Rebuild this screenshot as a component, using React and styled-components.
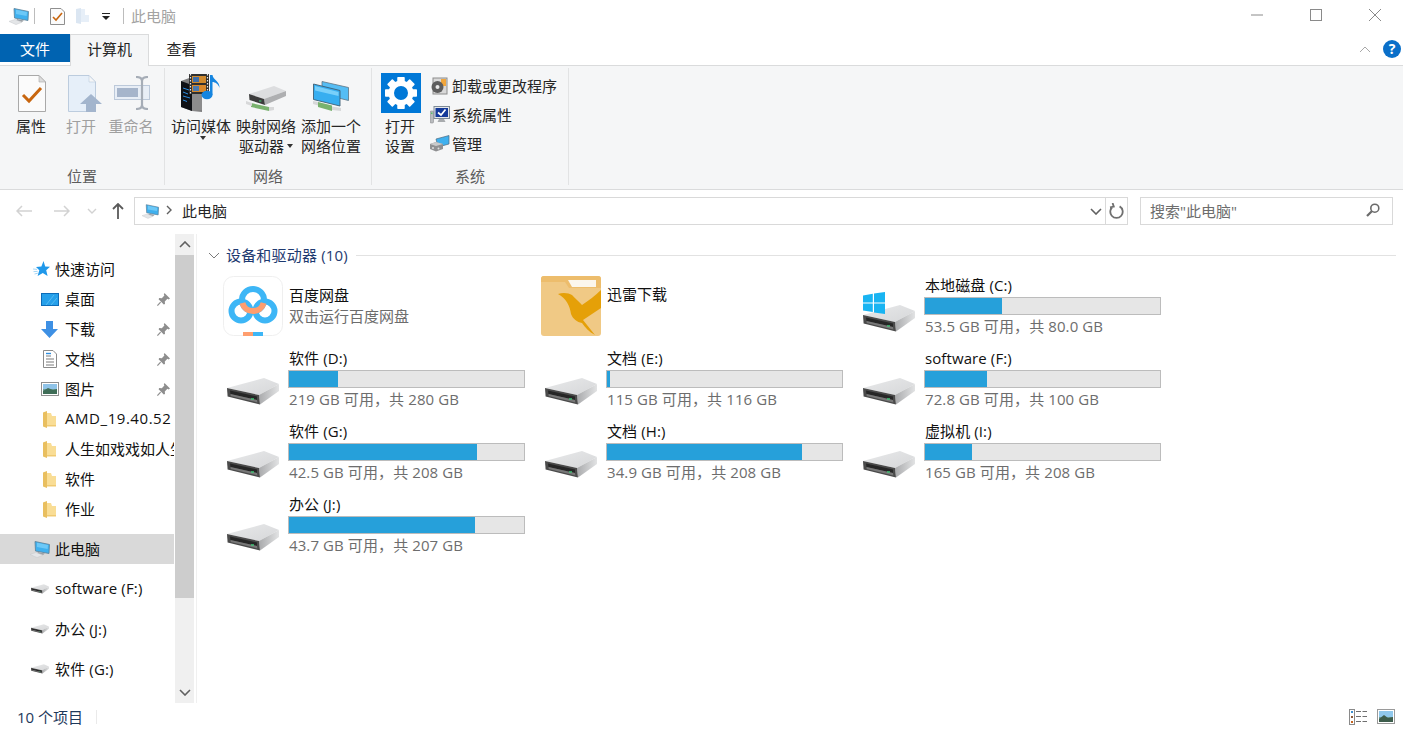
import React from "react";
import styled, { createGlobalStyle } from "styled-components";

const GlobalStyle = createGlobalStyle`
  html, body {
    margin: 0;
    padding: 0;
    background: #fff;
    overflow: hidden;
  }
  body {
    font-family: "Open Sans", "Noto Sans CJK SC", sans-serif;
    font-size: 15px;
    color: #111;
  }
  * { box-sizing: border-box; }
`;

// icons

const ComputerIcon = ({ w = 20, h = 17 }) => (
  <svg width={w} height={h} viewBox="0 0 20 17">
    <path d="M5 0.5 L19.5 3.5 L19 12.5 L5.5 10 Z" fill="#3fb0ee" stroke="#5c7f96" strokeWidth="0.8" />
    <path d="M7 1.8 L18 4 L17.6 8 L7 6 Z" fill="#6cc8f7" />
    <path d="M8 11 L15 12.4 L13 14 L7 12.8 Z" fill="#9aa0a6" />
    <path d="M0 13.4 L6 11.5 L13 14.2 L7 16.6 Z" fill="#e4e6e8" stroke="#c7c9cc" strokeWidth="0.5" />
  </svg>
);

const DiskIcon = ({ w = 52, h = 27 }) => (
  <svg width={w} height={h} viewBox="0 0 52 27">
    <defs>
      <linearGradient id="diskTop" x1="0" y1="0" x2="1" y2="1">
        <stop offset="0" stopColor="#e8e9ea" />
        <stop offset="1" stopColor="#d6d7d9" />
      </linearGradient>
      <linearGradient id="diskSide" x1="0" y1="0" x2="1" y2="0">
        <stop offset="0" stopColor="#a9aaac" />
        <stop offset="1" stopColor="#e2e3e4" />
      </linearGradient>
    </defs>
    <path d="M0 10 L37 0 L52 6 L32 17 Z" fill="url(#diskTop)" />
    <path d="M32 17 L52 6 L52 13 L33 26.5 Z" fill="url(#diskSide)" />
    <path d="M0 10 L32 17 L33 26.5 L0.6 18.5 Z" fill="#4a4a4a" />
    <path d="M3 12.5 L30 18.4 L30 22 L3.5 16 Z" fill="#262626" />
    <path d="M3.5 16 L30 22 L30.4 24.4 L3.7 18 Z" fill="#777" />
    <rect x="24" y="20.3" width="3" height="1.3" fill="#3fd17a" />
  </svg>
);

const WindowsLogo = () => (
  <svg width="22" height="22" viewBox="0 0 22 22">
    <path d="M0 3.4 L9.8 1.8 V10.4 H0 Z M11 1.6 L22 0 V10.4 H11 Z M0 11.6 H9.8 V20 L0 18.6 Z M11 11.6 H22 V22 L11 20.4 Z" fill="#19b4f2" />
  </svg>
);

const BaiduIcon = () => (
  <svg width="60" height="60" viewBox="0 0 60 60">
    <rect x="0.5" y="0.5" width="59" height="59" rx="10" fill="#fff" stroke="#efefef" />
    <circle cx="18" cy="35" r="9.5" fill="none" stroke="#3db6f6" strokeWidth="6" />
    <circle cx="42" cy="35" r="9.5" fill="none" stroke="#3db6f6" strokeWidth="6" />
    <circle cx="30" cy="24" r="11" fill="none" stroke="#3db6f6" strokeWidth="6" />
    <path d="M19.4 27 A11 11 0 0 0 40.6 27" fill="none" stroke="#ff9e6e" strokeWidth="6" />
    <rect x="20" y="56" width="10" height="4" fill="#ff9e6e" />
    <rect x="30" y="56" width="10" height="4" fill="#3db6f6" />
  </svg>
);

const XunleiIcon = () => (
  <svg width="60" height="60" viewBox="0 0 60 60">
    <rect width="60" height="60" rx="3" fill="#f0c985" />
    <path d="M0 3 Q0 0 3 0 H57 Q60 0 60 3 V12 L28 12 L24 6 H0 Z" fill="#edbd6c" />
    <path d="M27 4 H55 V11 H31 Z" fill="#fbf6ec" />
    <path d="M17 18 C22 16 28 17 31 19 C34 22 38 26 41 29 C47 25 54 20 60 14 V32 C54 36 48 40 42 44 L54 59 C48 56 44 51 41 47 C36 46 32 43 30 38 C29 30 25 22 17 18 Z" fill="#e5a008" />
  </svg>
);

const PropsIcon = () => (
  <svg width="28" height="37" viewBox="0 0 28 37">
    <path d="M0.5 0.5 H21 L27.5 7 V36.5 H0.5 Z" fill="#fbfbfb" stroke="#a9a9a9" />
    <path d="M21 0.5 V7 H27.5 Z" fill="#dcdcdc" stroke="#a9a9a9" strokeWidth="0.6" />
    <path d="M5 20 L11 26 L23 13" fill="none" stroke="#c8660f" strokeWidth="3" />
  </svg>
);

const OpenIcon = () => (
  <svg width="34" height="37" viewBox="0 0 34 37">
    <path d="M0.5 0.5 H21 L27.5 7 V36.5 H0.5 Z" fill="#e6eff9" stroke="#bcccde" />
    <path d="M21 0.5 V7 H27.5 Z" fill="#f5f6f7" stroke="#bcccde" strokeWidth="0.6" />
    <path d="M23 19 L34 29 H28 V37 H18 V29 H12 Z" fill="#a3b5cd" />
  </svg>
);

const RenameIcon = () => (
  <svg width="36" height="34" viewBox="0 0 36 34">
    <rect x="0.5" y="9.5" width="35" height="14" fill="#e8eef6" stroke="#bcc9da" />
    <rect x="3" y="12" width="21" height="9" fill="#a6b5cb" />
    <path d="M22 1 Q28 1 28 5 V29 Q28 33 22 33 M34 1 Q28 1 28 5 M28 29 Q28 33 34 33" fill="none" stroke="#a6adb7" strokeWidth="2.2" />
  </svg>
);

const MediaIcon = () => (
  <svg width="40" height="39" viewBox="0 0 40 39">
    <path d="M0 7 L11 3 L21 8 V38 L11 37 L0 33 Z" fill="#7f7f80" />
    <path d="M0 7 L11 11 V37 L0 33 Z" fill="#0f1116" />
    <path d="M11 11 L21 8 V36 L11 37 Z" fill="#8c8c8d" />
    <path d="M2 14 L8 16 M2 18 L7 20 M2 22 L9 24 M2 26 L6 27.5" stroke="#2d8ce0" strokeWidth="1" />
    <rect x="8" y="0" width="20" height="20" fill="#2f2f2f" />
    <rect x="11" y="2" width="14" height="7" fill="#d08a2e" />
    <rect x="11" y="11" width="14" height="7" fill="#d9882b" />
    <rect x="12" y="3" width="6" height="5" fill="#3f6ea8" />
    <rect x="12" y="12" width="6" height="5" fill="#4a7ab0" />
    <path d="M9.5 0 V20 M26.5 0 V20" stroke="#e8e8e8" strokeWidth="1.2" strokeDasharray="1.5 1.5" />
    <ellipse cx="26" cy="21" rx="5.5" ry="4.2" fill="#1585e0" />
    <path d="M29 21 V1 H31.5 C32 6 39 7 38.5 14 C37.5 10 34 8 31.5 8 V21 Z" fill="#1585e0" />
  </svg>
);

const NetDriveIcon = () => (
  <svg width="40" height="25" viewBox="0 0 40 25">
    <path d="M3 8 L28 0 L40 5 L18 13 Z" fill="#dcdddf" />
    <path d="M18 13 L40 5 V10 L19 19 Z" fill="#aeafb1" />
    <path d="M3 8 L18 13 L19 19 L3.5 14 Z" fill="#3c3c3c" />
    <rect x="13" y="14.5" width="2.4" height="1" fill="#3fd17a" />
    <path d="M5 17 L23 21 L23 25 L5 21 Z" fill="#79b26e" />
    <path d="M0 15 L6 17 L6 20 L0 18 Z M23 21 L28 21 L28 24 L23 25 Z" fill="#d7d8d9" />
  </svg>
);

const NetPlaceIcon = () => (
  <svg width="36" height="30" viewBox="0 0 36 30">
    <path d="M9 0.5 L35.5 6.5 V19.5 L9 13 Z" fill="#55bdf4" stroke="#5f7382" strokeWidth="0.8" />
    <path d="M0.5 3 L27 9.5 V25 L0.5 18.5 Z" fill="#37aef0" stroke="#3f5f74" strokeWidth="0.9" />
    <path d="M2 5 L25.5 11 V15 L2 9.5 Z" fill="#79d0fa" />
    <path d="M5 21 L19 24.5 V30 L5 26 Z" fill="#79b26e" />
    <path d="M0 20 L5 21 V24.5 L0 23 Z M19 25.5 L28 27 V30 L19 29 Z" fill="#d7d8d9" />
  </svg>
);

const GearIcon = () => (
  <svg width="40" height="40" viewBox="0 0 40 40">
    <rect width="40" height="40" fill="#0078d7" />
    {[0, 45, 90, 135, 180, 225, 270, 315].map((a) => (
      <rect key={a} x="16.25" y="4" width="7.5" height="7" rx="0.8" fill="#fff" transform={`rotate(${a} 20 20)`} />
    ))}
    <circle cx="20" cy="20" r="9.75" fill="none" stroke="#fff" strokeWidth="5.5" />
  </svg>
);

const UninstallIcon = () => (
  <svg width="18" height="18" viewBox="0 0 18 18">
    <rect x="3" y="1" width="14" height="16" fill="#d9d9d9" stroke="#8c8c8c" />
    <rect x="11" y="2" width="5" height="7" fill="#f1a63c" />
    <circle cx="7.5" cy="10" r="6" fill="#5d5d5d" />
    <circle cx="7.5" cy="10" r="2" fill="#e8e8e8" />
  </svg>
);

const SysPropsIcon = () => (
  <svg width="20" height="18" viewBox="0 0 20 18">
    <rect x="0" y="5" width="3.5" height="12" rx="1" fill="#b9bcbf" stroke="#7c7f82" strokeWidth="0.5" />
    <rect x="1" y="6.5" width="1.5" height="1.5" fill="#56c26b" />
    <rect x="4" y="0.5" width="15.5" height="12" fill="#e6e8ea" stroke="#7d8a96" />
    <rect x="5.5" y="2" width="12.5" height="9" fill="#143a9a" />
    <path d="M8 6.5 L11 9 L15.5 3.5" fill="none" stroke="#fff" strokeWidth="1.7" />
    <path d="M9 13 H14 L15.5 16 H7.5 Z" fill="#a8abae" />
  </svg>
);

const ManageIcon = () => (
  <svg width="20" height="17" viewBox="0 0 20 17">
    <path d="M6 4 L19 0.5 V9 L8 12 Z" fill="#3fb0ee" stroke="#4d6a80" strokeWidth="0.7" />
    <path d="M0 9 L6 7 L13 9 V14 L6 16.5 L0 14 Z" fill="#8f9092" />
    <path d="M0 9 L6 7 L13 9 L6 11 Z" fill="#c9cacb" />
    <circle cx="3" cy="13" r="1" fill="#ddd" />
    <circle cx="8.5" cy="13.5" r="1" fill="#ddd" />
  </svg>
);

const LineIcon = styled.svg`
  display: block;
  fill: none;
  stroke: ${(p) => p.$color || "#7a7a7a"};
  stroke-width: ${(p) => p.$weight || 1.4};
`;

const StarIcon = () => (
  <svg width="17" height="16" viewBox="0 0 17 16">
    <path d="M10.5 0 L12.2 5.4 L17 5.8 L13.2 9.2 L14.6 15 L9.8 11.9 L4.6 15 L6.3 9.3 L3 6 L8.4 5.5 Z" fill="#1f98ea" />
    <path d="M0 8 L4 8.4 M0.5 10.6 L4.6 10.4 M1.5 13 L4.8 12.2" stroke="#8fcbf3" strokeWidth="0.8" />
  </svg>
);

const DesktopIcon = () => (
  <svg width="18" height="13" viewBox="0 0 18 13">
    <rect x="0.5" y="0.5" width="17" height="12" fill="#26a0ea" stroke="#0d6cb8" />
    <path d="M5 12 L13 2 M10 12 L16 5" stroke="#63c1f4" strokeWidth="0.8" />
    <rect x="0" y="12" width="18" height="1" fill="#0d6cb8" />
  </svg>
);

const DownloadIcon = () => (
  <svg width="17" height="17" viewBox="0 0 17 17">
    <path d="M5 0 H12 V8 H17 L8.5 17 L0 8 H5 Z" fill="#3e90e4" />
  </svg>
);

const DocIcon = () => (
  <svg width="14" height="18" viewBox="0 0 14 18">
    <path d="M0.5 0.5 H10 L13.5 4 V17.5 H0.5 Z" fill="#fff" stroke="#8b8b8b" />
    <path d="M3 6 H8 M3 9 H11 M3 12 H11 M3 15 H11" stroke="#7a7a7a" strokeWidth="1" />
    <path d="M3 3.5 H8" stroke="#2f8fe0" strokeWidth="1.4" />
  </svg>
);

const PictureIcon = () => (
  <svg width="18" height="14" viewBox="0 0 18 14">
    <rect x="0.5" y="0.5" width="17" height="13" fill="#fff" stroke="#8f8f8f" />
    <rect x="2" y="2" width="14" height="5" fill="#8fc3e8" />
    <rect x="2" y="7" width="14" height="5" fill="#6f9e9a" />
    <path d="M2 9 L7 6 L12 8 L16 7 V12 H2 Z" fill="#3f6d57" />
  </svg>
);

const FolderIcon = () => (
  <svg width="13" height="17" viewBox="0 0 13 17">
    <path d="M0 1.5 L4 0 V17 L0 15.5 Z" fill="#e9bf5f" />
    <path d="M4 2 H8 L9 5 H13 V15 H4 Z" fill="#f9dd95" />
    <path d="M4 14 H13 V15.5 H4 Z" fill="#f0ca72" />
  </svg>
);

const PinIcon = () => (
  <svg width="13" height="13" viewBox="0 0 13 13">
    <path d="M7.5 0 L13 5.5 L11.6 6.4 L10.4 5.8 L7.8 8.4 L8 11 L6.8 11.6 L1.6 6.2 L2.2 5 L4.8 5.2 L7.4 2.6 L6.8 1.4 Z" fill="#8e8e8e" />
    <path d="M3.6 9.2 L0.4 12.6" stroke="#8e8e8e" strokeWidth="1.2" />
  </svg>
);

const DetailViewIcon = () => (
  <svg width="18" height="16" viewBox="0 0 18 16">
    <rect x="0.5" y="0.5" width="5" height="15" fill="#fff" stroke="#8a8a8a" />
    <rect x="2" y="2" width="2" height="2" fill="#3b8fd0" />
    <rect x="2" y="7" width="2" height="2" fill="#8a5a3a" />
    <rect x="2" y="12" width="2" height="2" fill="#c7641f" />
    <path d="M7 2.5 H12 M13.5 2.5 H18 M7 7.5 H12 M13.5 7.5 H18 M7 12.5 H12 M13.5 12.5 H18" stroke="#6f6f6f" strokeWidth="1" />
  </svg>
);

const LargeViewIcon = () => (
  <svg width="18" height="15" viewBox="0 0 18 15">
    <rect x="0.5" y="0.5" width="17" height="14" fill="#fff" stroke="#9a9a9a" />
    <rect x="2" y="2" width="14" height="6" fill="#8fc8ec" />
    <rect x="2" y="8" width="14" height="5" fill="#6d9c98" />
    <path d="M2 10 L7 6 L11 9 L16 8 V13 H2 Z" fill="#3d5d4c" />
  </svg>
);

// layout

const Page = styled.div`
  width: 100%;
  height: 732px;
  display: flex;
  flex-direction: column;
  background: #fff;
  overflow: hidden;
`;

const TitleBar = styled.div`
  height: 34px;
  display: flex;
  align-items: center;
  padding: 0 0 2px 9px;
`;

const QuickSlot = styled.span`
  display: flex;
  align-items: center;
  margin-left: ${(p) => p.$left || 0}px;
`;

const TitleDivider = styled.span`
  width: 1px;
  height: 16px;
  background: #bcbcbc;
  margin-left: ${(p) => p.$left}px;
`;

const WindowTitle = styled.span`
  margin: -2px 0 0 7px;
  color: #a3a3a3;
`;

const WindowControls = styled.div`
  margin: 0 -1px 0 auto;
  align-self: flex-start;
  display: flex;
`;

const WindowButton = styled.span`
  width: 59px;
  height: 30px;
  display: flex;
  align-items: center;
  justify-content: center;
`;

const TabRow = styled.div`
  height: 32px;
  display: flex;
  align-items: flex-start;
  border-bottom: 1px solid #dadbdc;
  position: relative;
`;

const Tab = styled.span`
  height: ${(p) => (p.$active ? 32 : 28)}px;
  width: ${(p) => p.$width}px;
  display: flex;
  align-items: center;
  justify-content: center;
  padding-bottom: ${(p) => (p.$active ? 4 : 0)}px;
  color: ${(p) => (p.$file ? "#fff" : "#262626")};
  background: ${(p) => (p.$file ? "#0063b1" : p.$active ? "#f5f6f7" : "transparent")};
  border: ${(p) => (p.$active ? "1px solid #dadbdc" : "none")};
  border-bottom: none;
  position: relative;
  z-index: 1;
`;

const TabTools = styled.div`
  margin-left: auto;
  height: 30px;
  display: flex;
  align-items: center;
  gap: 12px;
  padding-right: 2px;
`;

const HelpBadge = styled.span`
  width: 18px;
  height: 18px;
  border-radius: 50%;
  background: #0a6fc9;
  color: #fff;
  font-size: 14px;
  font-weight: 700;
  line-height: 18px;
  text-align: center;
`;

const Ribbon = styled.div`
  height: 124px;
  display: flex;
  align-items: stretch;
  background: #f5f6f7;
  border-bottom: 1px solid #dadbdc;
  padding: 2px 0 4px;
`;

const Group = styled.section`
  width: ${(p) => p.$width}px;
  display: flex;
  flex-direction: column;
  border-right: 1px solid #e2e3e4;
`;

const GroupBody = styled.div`
  flex: 1;
  display: flex;
  gap: ${(p) => p.$gap || 0}px;
  padding: 5px 0 0 ${(p) => p.$pad}px;
`;

const GroupLabel = styled.div`
  height: 18px;
  line-height: 18px;
  text-align: center;
  color: #5c5c5c;
`;

const RibbonButton = styled.div`
  width: ${(p) => p.$width}px;
  display: flex;
  flex-direction: column;
  align-items: center;
  text-align: center;
  color: ${(p) => (p.$disabled ? "#a0a0a0" : "#262626")};
`;

const IconBox = styled.div`
  height: 40px;
  display: flex;
  align-items: ${(p) => p.$align || "center"};
  justify-content: center;
  margin-bottom: 3px;
  padding-left: ${(p) => p.$shift || 0}px;
  padding-bottom: ${(p) => (p.$align ? 2 : 0)}px;
`;

const ButtonLine = styled.div`
  height: 20px;
  line-height: 20px;
  white-space: nowrap;
  display: flex;
  align-items: center;
  gap: 3px;
`;

const SettingsLine = styled(ButtonLine)`
  margin-right: 2px;
`;

const Caret = styled.span`
  width: 0;
  height: 0;
  border-left: 3.5px solid transparent;
  border-right: 3.5px solid transparent;
  border-top: 4px solid #333;
`;

const MenuCaret = styled(Caret)`
  margin-left: 3px;
`;

const SmallList = styled.div`
  display: flex;
  flex-direction: column;
  margin-left: 9px;
  margin-top: -2px;
`;

const SmallRow = styled.div`
  height: 29px;
  display: flex;
  align-items: center;
  color: #262626;
  white-space: nowrap;
`;

const SmallIcon = styled.span`
  width: 22px;
  display: flex;
  align-items: center;
`;

const AddressRow = styled.div`
  height: 44px;
  display: flex;
  align-items: flex-start;
  padding-top: 7px;
`;

const NavButtons = styled.div`
  width: 134px;
  height: 28px;
  display: flex;
  align-items: center;
  padding-left: 16px;
`;

const NavSlot = styled.span`
  display: flex;
  margin-left: ${(p) => p.$left || 0}px;
`;

const AddressBox = styled.div`
  width: 994px;
  height: 28px;
  display: flex;
  align-items: center;
  border: 1px solid #d9d9d9;
  padding-left: 7px;
`;

const Crumb = styled.span`
  margin-left: ${(p) => p.$left}px;
  display: flex;
  align-items: center;
  color: #262626;
  padding-bottom: 2px;
`;

const AddressEnd = styled.span`
  margin-left: auto;
  height: 100%;
  display: flex;
  align-items: center;
`;

const RefreshSlot = styled.span`
  width: 22px;
  height: 100%;
  margin-left: 3px;
  border-left: 1px solid #d9d9d9;
  display: flex;
  align-items: center;
  justify-content: center;
`;

const SearchBox = styled.div`
  width: 253px;
  height: 28px;
  margin-left: 12px;
  display: flex;
  align-items: center;
  justify-content: space-between;
  padding: 0 12px 2px 9px;
  border: 1px solid #d9d9d9;
  color: #6d6d6d;
`;

const Main = styled.div`
  flex: 1;
  min-height: 0;
  display: flex;
`;

const Sidebar = styled.nav`
  width: 174px;
  padding-top: 20px;
  overflow: hidden;
  flex-shrink: 0;
`;

const NavRow = styled.div`
  height: 30px;
  display: flex;
  align-items: center;
  white-space: nowrap;
  overflow: hidden;
  position: relative;
  margin-top: ${(p) => p.$gap || 0}px;
  padding-left: ${(p) => (p.$child ? 40 : 30)}px;
  padding-bottom: 2px;
  background: ${(p) => (p.$selected ? "#d9d9d9" : "transparent")};
  color: #111;
  letter-spacing: ${(p) => p.$spacing || 0}px;
`;

const NavIcon = styled.span`
  width: 25px;
  flex-shrink: 0;
  display: flex;
  align-items: center;
  justify-content: ${(p) => (p.$child ? "center" : "flex-start")};
  padding-right: ${(p) => (p.$child ? 6 : 0)}px;
  padding-left: ${(p) => p.$inset || 0}px;
  margin-top: 2px;
`;

const PinSlot = styled.span`
  position: absolute;
  right: 4px;
  top: 9px;
  display: flex;
`;

const ScrollTrack = styled.div`
  width: 19px;
  margin-left: 1px;
  flex-shrink: 0;
  display: flex;
  flex-direction: column;
  background: #f0f0f0;
`;

const ScrollArrow = styled.div`
  height: 21px;
  display: flex;
  align-items: center;
  justify-content: center;
`;

const ScrollThumb = styled.div`
  height: 343px;
  background: #cdcdcd;
`;

const ScrollRest = styled.div`
  flex: 1;
`;

const Content = styled.main`
  flex: 1;
  margin-left: 2px;
  border-left: 1px solid #f0f0f0;
  padding: 11px 7px 0 11px;
`;

const SectionHeader = styled.div`
  height: 20px;
  display: flex;
  align-items: center;
  padding-bottom: 2px;
  color: #1e3a70;
  white-space: nowrap;
  letter-spacing: 0.18px;
`;

const SectionChevron = styled.span`
  width: 18px;
  margin-top: 2px;
  display: flex;
`;

const SectionRule = styled.span`
  flex: 1;
  height: 1px;
  background: #e2e2e2;
  margin: 2px 0 0 8px;
`;

const TileGrid = styled.div`
  display: grid;
  grid-template-columns: repeat(3, 318px);
  grid-auto-rows: 73px;
  margin: 11px 0 0 14px;
`;

const Tile = styled.div`
  display: flex;
  position: relative;
`;

const TileIcon = styled.div`
  width: 66px;
  flex-shrink: 0;
  display: flex;
  align-items: flex-end;
  padding: 0 0 17px 5px;
`;

const AppIcon = styled.div`
  width: 66px;
  flex-shrink: 0;
  padding-left: 1px;
`;

const WindowsBadge = styled.span`
  position: absolute;
  left: 5px;
  top: 16px;
  display: flex;
`;

const TileBody = styled.div`
  width: 237px;
`;

const AppBody = styled.div`
  padding-top: ${(p) => p.$top}px;
  white-space: nowrap;
`;

const TileName = styled.div`
  height: 18px;
  line-height: 18px;
  padding-left: 1px;
  color: #111;
  white-space: nowrap;
`;

const DriveName = styled(TileName)`
  letter-spacing: 0.1px;
`;

const AppDesc = styled.div`
  margin-top: 3px;
  height: 18px;
  line-height: 18px;
  padding-left: 1px;
  color: #6d6d6d;
`;

const Bar = styled.div`
  height: 18px;
  margin-top: 3px;
  background: #e6e6e6;
  border: 1px solid #bcbcbc;
`;

const BarFill = styled.div`
  height: 100%;
  background: #26a0da;
`;

const Capacity = styled.div`
  height: 18px;
  line-height: 18px;
  margin-top: 2px;
  padding-left: 1px;
  color: #6d6d6d;
  white-space: nowrap;
  letter-spacing: 0.1px;
`;

const StatusBar = styled.footer`
  height: 29px;
  display: flex;
  align-items: center;
  padding: 0 8px 2px 17px;
  color: #1e395b;
`;

const StatusDivider = styled.span`
  width: 1px;
  height: 14px;
  background: #eaeaea;
  margin-left: 13px;
`;

const ViewSwitch = styled.div`
  margin-left: auto;
  display: flex;
  align-items: center;
  gap: 10px;
`;

// data, fill is the used part of the bar in px

const drives = [
  { name: "本地磁盘 (C:)", fill: 77, label: "53.5 GB 可用，共 80.0 GB", system: true },
  { name: "软件 (D:)", fill: 49, label: "219 GB 可用，共 280 GB" },
  { name: "文档 (E:)", fill: 3, label: "115 GB 可用，共 116 GB" },
  { name: "software (F:)", fill: 62, label: "72.8 GB 可用，共 100 GB" },
  { name: "软件 (G:)", fill: 188, label: "42.5 GB 可用，共 208 GB" },
  { name: "文档 (H:)", fill: 195, label: "34.9 GB 可用，共 208 GB" },
  { name: "虚拟机 (I:)", fill: 47, label: "165 GB 可用，共 208 GB" },
  { name: "办公 (J:)", fill: 186, label: "43.7 GB 可用，共 207 GB" },
];

const pinned = [
  { name: "桌面", icon: <DesktopIcon /> },
  { name: "下载", icon: <DownloadIcon /> },
  { name: "文档", icon: <DocIcon /> },
  { name: "图片", icon: <PictureIcon /> },
];

const folders = [
  { name: "AMD_19.40.52", spacing: 0.55 },
  { name: "人生如戏戏如人生" },
  { name: "软件" },
  { name: "作业" },
];
const sideDrives = ["software (F:)", "办公 (J:)", "软件 (G:)"];

function DriveTile({ drive }) {
  return (
    <Tile>
      <TileIcon>
        <DiskIcon />
      </TileIcon>
      {drive.system && <WindowsBadge><WindowsLogo /></WindowsBadge>}
      <TileBody>
        <DriveName>{drive.name}</DriveName>
        <Bar>
          <BarFill style={{ width: drive.fill }} />
        </Bar>
        <Capacity>{drive.label}</Capacity>
      </TileBody>
    </Tile>
  );
}

function Chevron({ d = "M1 1 L6 6 L11 1", w = 12, h = 7, color, weight }) {
  return (
    <LineIcon width={w} height={h} viewBox={`0 0 ${w} ${h}`} $color={color} $weight={weight}>
      <path d={d} />
    </LineIcon>
  );
}

export default function App() {
  return (
    <Page>
      <GlobalStyle />
      <TitleBar>
        <ComputerIcon />
        <TitleDivider $left={5} />
        <QuickSlot $left={15}>
          <svg width="15" height="17" viewBox="0 0 15 17">
            <path d="M0.5 0.5 H11 L14.5 4 V16.5 H0.5 Z" fill="#fbfbfb" stroke="#8f8f8f" />
            <path d="M3 9 L6 12 L12 5" fill="none" stroke="#c8660f" strokeWidth="1.6" />
          </svg>
        </QuickSlot>
        <QuickSlot $left={11}>
          <svg width="13" height="16" viewBox="0 0 13 16">
            <path d="M0 1 L5 0 V16 L0 15 Z" fill="#dbe6f2" />
            <path d="M5 1 H9 V7 H13 V14 H5 Z" fill="#e7eff8" />
          </svg>
        </QuickSlot>
        <QuickSlot $left={13}>
          <svg width="8" height="7" viewBox="0 0 8 7">
            <path d="M0 0 H8 V1 H0 Z M0 3 H8 L4 7 Z" fill="#222" />
          </svg>
        </QuickSlot>
        <TitleDivider $left={13} />
        <WindowTitle>此电脑</WindowTitle>
        <WindowControls>
          <WindowButton>
            <LineIcon width="12" height="2" viewBox="0 0 12 2" $color="#8a8a8a" $weight="1">
              <path d="M0 1 H12" />
            </LineIcon>
          </WindowButton>
          <WindowButton>
            <LineIcon width="12" height="12" viewBox="0 0 12 12" $color="#8a8a8a" $weight="1">
              <rect x="0.5" y="0.5" width="11" height="11" />
            </LineIcon>
          </WindowButton>
          <WindowButton>
            <LineIcon width="12" height="12" viewBox="0 0 12 12" $color="#8a8a8a" $weight="1">
              <path d="M0 0 L12 12 M12 0 L0 12" />
            </LineIcon>
          </WindowButton>
        </WindowControls>
      </TitleBar>

      <TabRow>
        <Tab $file $width={70}>文件</Tab>
        <Tab $active $width={79}>计算机</Tab>
        <Tab $width={65}>查看</Tab>
        <TabTools>
          <Chevron d="M1 6 L6 1 L11 6" color="#a8a8a8" weight="1" />
          <HelpBadge>?</HelpBadge>
        </TabTools>
      </TabRow>

      <Ribbon>
        <Group $width={165}>
          <GroupBody $pad={6}>
            <RibbonButton $width={50}>
              <IconBox $shift={2}><PropsIcon /></IconBox>
              <ButtonLine>属性</ButtonLine>
            </RibbonButton>
            <RibbonButton $width={50} $disabled>
              <IconBox $shift={8}><OpenIcon /></IconBox>
              <ButtonLine>打开</ButtonLine>
            </RibbonButton>
            <RibbonButton $width={50} $disabled>
              <IconBox $shift={2}><RenameIcon /></IconBox>
              <ButtonLine>重命名</ButtonLine>
            </RibbonButton>
          </GroupBody>
          <GroupLabel>位置</GroupLabel>
        </Group>
        <Group $width={207}>
          <GroupBody $pad={6} $gap={5}>
            <RibbonButton $width={60}>
              <IconBox><MediaIcon /></IconBox>
              <ButtonLine>访问媒体</ButtonLine>
              <MenuCaret />
            </RibbonButton>
            <RibbonButton $width={60}>
              <IconBox $align="flex-end"><NetDriveIcon /></IconBox>
              <ButtonLine>映射网络</ButtonLine>
              <ButtonLine>驱动器<Caret /></ButtonLine>
            </RibbonButton>
            <RibbonButton $width={60}>
              <IconBox $align="flex-end"><NetPlaceIcon /></IconBox>
              <ButtonLine>添加一个</ButtonLine>
              <ButtonLine>网络位置</ButtonLine>
            </RibbonButton>
          </GroupBody>
          <GroupLabel>网络</GroupLabel>
        </Group>
        <Group $width={197}>
          <GroupBody $pad={9}>
            <RibbonButton $width={40}>
              <IconBox><GearIcon /></IconBox>
              <SettingsLine>打开</SettingsLine>
              <SettingsLine>设置</SettingsLine>
            </RibbonButton>
            <SmallList>
              <SmallRow><SmallIcon><UninstallIcon /></SmallIcon>卸载或更改程序</SmallRow>
              <SmallRow><SmallIcon><SysPropsIcon /></SmallIcon>系统属性</SmallRow>
              <SmallRow><SmallIcon><ManageIcon /></SmallIcon>管理</SmallRow>
            </SmallList>
          </GroupBody>
          <GroupLabel>系统</GroupLabel>
        </Group>
      </Ribbon>

      <AddressRow>
        <NavButtons>
          <NavSlot>
            <LineIcon width="16" height="12" viewBox="0 0 16 12" $color="#d2d2d2" $weight="1.5">
              <path d="M16 6 H1 M6 1 L1 6 L6 11" />
            </LineIcon>
          </NavSlot>
          <NavSlot $left={22}>
            <LineIcon width="16" height="12" viewBox="0 0 16 12" $color="#d2d2d2" $weight="1.5">
              <path d="M0 6 H15 M10 1 L15 6 L10 11" />
            </LineIcon>
          </NavSlot>
          <NavSlot $left={17}>
            <Chevron d="M1 1 L5 5 L9 1" w={10} h={6} color="#d2d2d2" />
          </NavSlot>
          <NavSlot $left={15}>
            <LineIcon width="12" height="16" viewBox="0 0 12 16" $color="#5a5a5a" $weight="1.8">
              <path d="M6 16 V1 M1 6 L6 1 L11 6" />
            </LineIcon>
          </NavSlot>
        </NavButtons>
        <AddressBox>
          <ComputerIcon w={17} h={15} />
          <Crumb $left={7}>
            <Chevron d="M1 1 L5 5 L1 9" w={6} h={10} color="#606060" />
          </Crumb>
          <Crumb $left={10}>此电脑</Crumb>
          <AddressEnd>
            <Chevron d="M1 1 L6 6 L11 1" color="#606060" weight="1.6" />
            <RefreshSlot>
              <LineIcon width="15" height="16" viewBox="0 0 15 16" $color="#707070" $weight="1.8">
                <path d="M4.4 3.4 A6.2 6.2 0 1 0 10.6 3.4 M3.6 0 L4.8 3.6 L1 4.4" />
              </LineIcon>
            </RefreshSlot>
          </AddressEnd>
        </AddressBox>
        <SearchBox>
          搜索"此电脑"
          <LineIcon width="14" height="14" viewBox="0 0 14 14" $color="#6a6a6a" $weight="1.6">
            <circle cx="8.8" cy="5.2" r="4" />
            <path d="M5.8 8.2 L1 13" strokeWidth="2.2" />
          </LineIcon>
        </SearchBox>
      </AddressRow>

      <Main>
        <Sidebar>
          <NavRow>
            <NavIcon $inset={3}><StarIcon /></NavIcon>
            快速访问
          </NavRow>
          {pinned.map((item) => (
            <NavRow $child key={item.name}>
              <NavIcon $child>{item.icon}</NavIcon>
              {item.name}
              <PinSlot><PinIcon /></PinSlot>
            </NavRow>
          ))}
          {folders.map((folder) => (
            <NavRow $child $spacing={folder.spacing} key={folder.name}>
              <NavIcon $child><FolderIcon /></NavIcon>
              {folder.name}
            </NavRow>
          ))}
          <NavRow $selected $gap={10}>
            <NavIcon><ComputerIcon /></NavIcon>
            此电脑
          </NavRow>
          {sideDrives.map((name) => (
            <NavRow $gap={10} $spacing={0.15} key={name}>
              <NavIcon $inset={1}><DiskIcon w={18} h={10} /></NavIcon>
              {name}
            </NavRow>
          ))}
        </Sidebar>
        <ScrollTrack>
          <ScrollArrow>
            <Chevron d="M1 6 L6 1 L11 6" color="#606060" weight="1.6" />
          </ScrollArrow>
          <ScrollThumb />
          <ScrollRest />
          <ScrollArrow>
            <Chevron color="#606060" weight="1.6" />
          </ScrollArrow>
        </ScrollTrack>
        <Content>
          <SectionHeader>
            <SectionChevron>
              <Chevron color="#7a7a7a" weight="1" />
            </SectionChevron>
            设备和驱动器 (10)
            <SectionRule />
          </SectionHeader>
          <TileGrid>
            <Tile>
              <AppIcon><BaiduIcon /></AppIcon>
              <AppBody $top={10}>
                <TileName>百度网盘</TileName>
                <AppDesc>双击运行百度网盘</AppDesc>
              </AppBody>
            </Tile>
            <Tile>
              <AppIcon><XunleiIcon /></AppIcon>
              <AppBody $top={9}>
                <TileName>迅雷下载</TileName>
              </AppBody>
            </Tile>
            {drives.map((drive) => (
              <DriveTile drive={drive} key={drive.name} />
            ))}
          </TileGrid>
        </Content>
      </Main>

      <StatusBar>
        10 个项目
        <StatusDivider />
        <ViewSwitch>
          <DetailViewIcon />
          <LargeViewIcon />
        </ViewSwitch>
      </StatusBar>
    </Page>
  );
}
